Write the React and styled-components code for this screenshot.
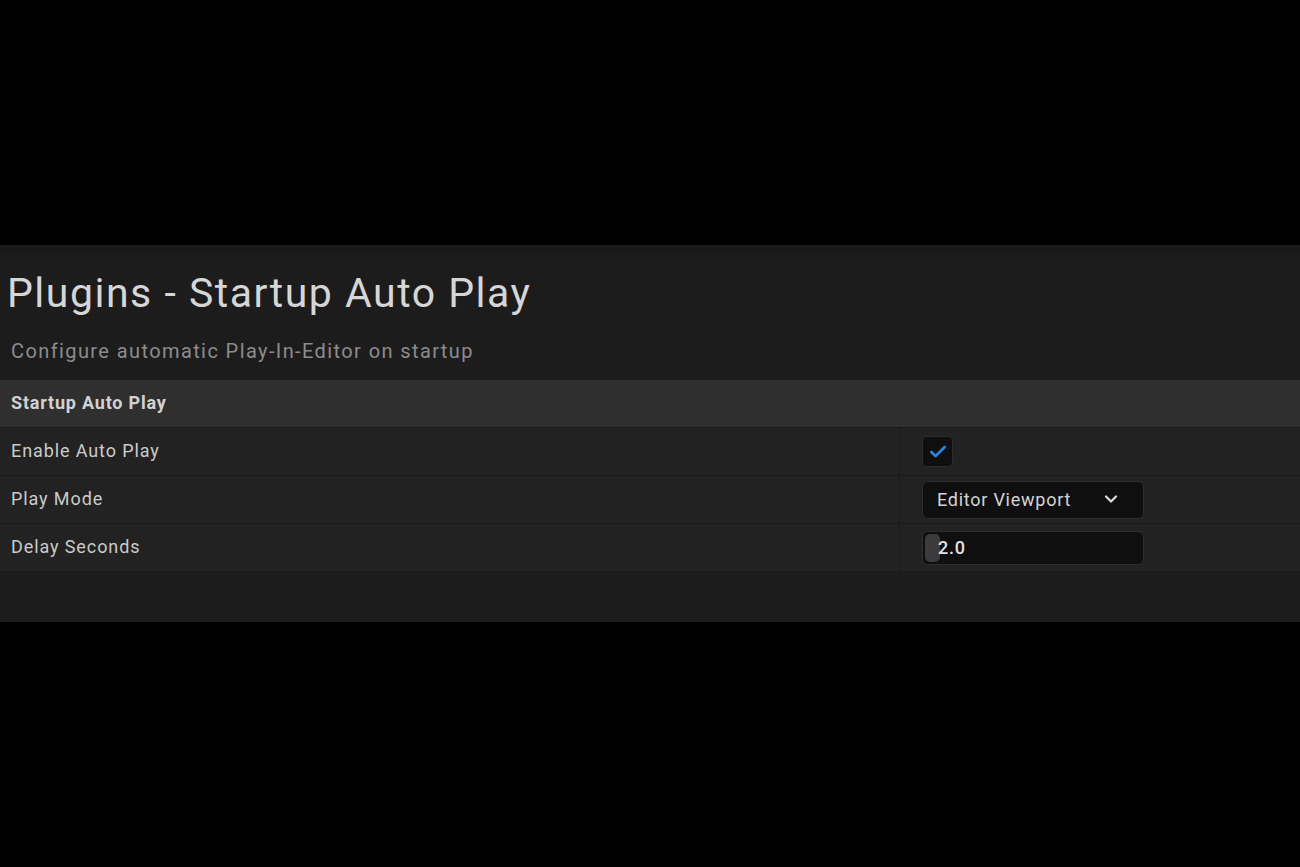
import React from "react";
import styled, { createGlobalStyle } from "styled-components";
import { ChevronDown, Check } from "lucide-react";

const GlobalStyle = createGlobalStyle`
  html, body {
    margin: 0;
    padding: 0;
    background: #000;
  }
  * {
    box-sizing: border-box;
  }
`;

const Page = styled.div`
  min-height: 100vh;
  display: flex;
  align-items: center;
  font-family: "Roboto", "Liberation Sans", sans-serif;
`;

const Panel = styled.div`
  width: 100%;
  background: #1c1c1c;
  border-top: 8px solid #1a1a1a;
`;

const Header = styled.div`
  padding: 16px 0 17px 0;
  display: flex;
  flex-direction: column;
  gap: 22px;
`;

const Title = styled.h1`
  margin: 0;
  padding-left: 7px;
  font-size: 41px;
  line-height: 48px;
  font-weight: 400;
  letter-spacing: 1.5px;
  color: #d6d6d6;
`;

const Subtitle = styled.div`
  padding-left: 11px;
  font-size: 20px;
  line-height: 24px;
  letter-spacing: 1.4px;
  color: #8c8c8c;
`;

const SectionHeader = styled.div`
  height: 48px;
  display: flex;
  align-items: center;
  padding: 0 0 3px 11px;
  background: #2f2f2f;
  border-bottom: 1px solid #1a1a1a;
  font-size: 18px;
  font-weight: 700;
  letter-spacing: 0.8px;
  color: #d2d2d2;
`;

const Row = styled.div`
  height: 48px;
  display: grid;
  grid-template-columns: 900px 1fr;
  background: #222222;
  border-bottom: 1px solid #1a1a1a;
`;

const Label = styled.div`
  display: flex;
  align-items: center;
  padding: 0 0 3px 11px;
  border-right: 1px solid #1a1a1a;
  font-size: 18px;
  letter-spacing: 0.9px;
  color: #cbcbcb;
`;

const Value = styled.div`
  display: flex;
  align-items: center;
  padding-left: 22px;
`;

const CheckBox = styled.div`
  width: 31px;
  height: 31px;
  border-radius: 4px;
  background: #0f0f0f;
  border: 1px solid #2c2c2c;
  display: flex;
  align-items: center;
  justify-content: center;
  color: #1f8ae6;
`;

const Field = styled.div`
  position: relative;
  width: 222px;
  height: ${(p) => p.$h}px;
  border-radius: 6px;
  background: #0f0f0f;
  border: 1px solid #2e2e2e;
  display: flex;
  align-items: center;
  justify-content: space-between;
  padding: 0 22px 1px ${(p) => p.$pl}px;
  font-size: 18px;
  letter-spacing: 0.75px;
  color: #d4d4d4;
`;

const Handle = styled.div`
  position: absolute;
  left: 2px;
  top: 2px;
  bottom: 2px;
  width: 15px;
  border-radius: 5px;
  background: #3b3b3b;
`;

const NumberText = styled.span`
  position: relative;
  font-weight: 500;
  color: #e2e2e2;
`;

const Footer = styled.div`
  height: 50px;
`;

export default function App() {
  return (
    <Page>
      <GlobalStyle />
      <Panel>
        <Header>
          <Title>Plugins - Startup Auto Play</Title>
          <Subtitle>Configure automatic Play-In-Editor on startup</Subtitle>
        </Header>
        <SectionHeader>Startup Auto Play</SectionHeader>
        <Row>
          <Label>Enable Auto Play</Label>
          <Value>
            <CheckBox>
              <Check size={20} strokeWidth={3.2} />
            </CheckBox>
          </Value>
        </Row>
        <Row>
          <Label>Play Mode</Label>
          <Value>
            <Field $h={38} $pl={14}>
              <span>Editor Viewport</span>
              <ChevronDown size={20} strokeWidth={2.6} color="#dcdcdc" />
            </Field>
          </Value>
        </Row>
        <Row>
          <Label>Delay Seconds</Label>
          <Value>
            <Field $h={34} $pl={15}>
              <Handle />
              <NumberText>2.0</NumberText>
            </Field>
          </Value>
        </Row>
        <Footer />
      </Panel>
    </Page>
  );
}
